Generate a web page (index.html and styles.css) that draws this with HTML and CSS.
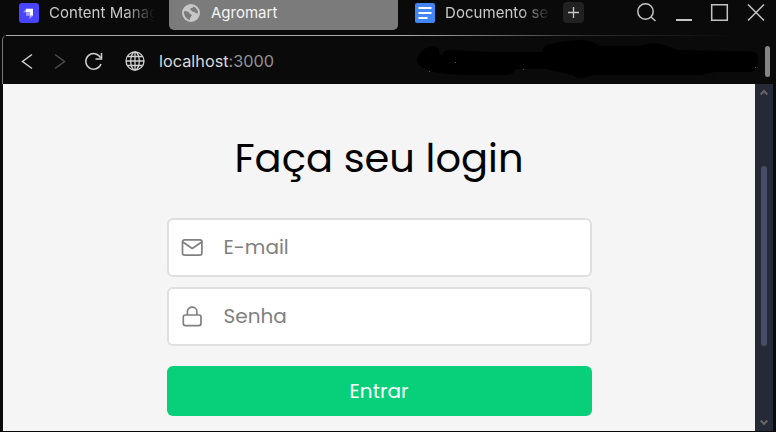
FILE: index.html
```html
<!DOCTYPE html>
<html lang="pt-BR">
<head>
<meta charset="utf-8">
<title>Agromart</title>
<link rel="stylesheet" href="styles.css">
</head>
<body>
<div class="window">
  <header class="tabs">
    <div class="tab tab-first">
      <svg class="tab-icon" width="20" height="20" viewBox="0 0 20 20"><rect width="20" height="20" rx="3" fill="#4945ff"/><path d="M7 5.700h7v7h-3.500V9.200H7z" fill="#fff"/><path d="M4 9.200L7 6v3.200zM7 9.200h3.500v3.500H7zM10.500 12.700H14l-3.500 3.400z" fill="#a5a3ff"/></svg>
      <span class="tab-label fade">Content Manag</span>
    </div>
    <div class="tab tab-active">
      <svg class="tab-icon" width="18" height="18" viewBox="0 0 18 18"><circle cx="9" cy="9" r="9" fill="#c7c7c7"/><path d="M2 7.300c2.200-.2 5 .2 5.300 1.700.3 1.400 2.200.8 2.500 2.300.2 1.200-1.600 1.500-1.700 2.800L8 16c-3.500-.6-6.300-4.500-6-8.700zM11.500 2.500c-.7 1.700-3 1.300-3.300 2.500-.2 1 1.300 1 1.600 2 .4 1.400 2.600.3 3.300 1.500.5.900 1.500 1 3 .7-.2-3-1.700-5.500-4.600-6.700z" fill="#7b7b7b"/></svg>
      <span class="tab-label">Agromart</span>
    </div>
    <div class="tab tab-doc">
      <svg class="tab-icon" width="20" height="20" viewBox="0 0 20 20"><rect width="20" height="20" rx="2" fill="#4285f4"/><path d="M3.500 5h13M3.500 10h13M3.500 15h9" stroke="#fff" stroke-width="2"/></svg>
      <span class="tab-label fade">Documento se</span>
    </div>
    <div class="new-tab"><svg width="21" height="21" viewBox="0 0 21 21"><path d="M5 10.500h11M10.500 5v11" stroke="#c8c8c8" stroke-width="1.300"/></svg></div>
    <svg class="controls" width="132" height="26" viewBox="636 0 132 26" fill="none" stroke="#c4c4c4" stroke-width="1.500"><circle cx="645.500" cy="11.500" r="7.700"/><path d="M651 17l4.500 4M748 4.500l16 16M764 4.500l-16 16"/><path d="M676 20h16" stroke-width="2"/><path d="M711.700 4.700h15.600v15.600h-15.600z"/></svg>
  </header>
  <div class="toolbar">
    <svg class="nav" width="130" height="28" viewBox="18 47 130 28" fill="none" stroke="#d0d0d0" stroke-width="1.500"><path d="M32 54.500L22.500 61.500l9.500 7"/><path d="M55 54.500l9.500 7-9.500 7" stroke="#4d4d4d"/><path d="M100.500 57.700A7.800 7.800 0 1 0 101 64M101.500 53v6h-6"/><g stroke-width="1.300"><circle cx="135" cy="61" r="9"/><ellipse cx="135" cy="61" rx="4.300" ry="9"/><path d="M135 52v18M126 61h18M127.500 56.500h15M127.500 65.500h15"/></g></svg>
    <div class="address">localhost<span class="port">:3000</span></div>
    <svg class="scribble" width="350" height="48" viewBox="412 36 350 48"><path d="M417 61c0-8 9-15 16-15 5 0 7 4 6 7l3 3c2-3 1-6 9-6l38 2h54c-1-7 5-8 13-9 17-4 34-5 44 3h40c12-6 25-1 38 4l57 1c18 0 22 1 23 5 1 5-1 10-2 13-3 4-8 3-15 3h-26l-14 3H592c-7 4-16 4-20 0l-26-6h-31c-1 6-6 6-14 6h-32c-25 0-49-3-52-14z" fill="#000"/><path d="M455 62.500h1M429 71.500h1M523 69.500h1M755 67.500h1" stroke="#555"/></svg>
    <div class="panel-thumb"></div>
  </div>
  <div class="viewport">
    <main class="page">
      <h1>Faça seu login</h1>
      <form class="login">
        <label class="field">
          <svg width="22" height="22" viewBox="0 0 22 22" fill="none" stroke="#808080" stroke-width="1.700" stroke-linejoin="round" stroke-linecap="round"><rect x="1.500" y="2.800" width="19.400" height="15.400" rx="2"/><path d="M1.800 5L11.200 11.500l9.500-6.500"/></svg>
          <span class="hint">E-mail</span>
        </label>
        <label class="field">
          <svg width="22" height="22" viewBox="0 0 22 22" fill="none" stroke="#808080" stroke-width="1.700"><rect x="2.300" y="9" width="17.700" height="10.600" rx="2"/><path d="M6.400 9V5.700c0-6 9.500-6 9.500 0V9"/></svg>
          <span class="hint">Senha</span>
        </label>
        <button type="button">Entrar</button>
      </form>
    </main>
    <aside class="scrollbar">
      <svg width="8" height="7" viewBox="0 0 8 7"><path d="M.7 5.500L4 2l3.300 3.500" fill="none" stroke="#686868" stroke-width="2"/></svg>
      <div class="thumb"></div>
      <svg class="down" width="8" height="7" viewBox="0 0 8 7"><path d="M.7 1.500L4 5l3.300-3.500" fill="none" stroke="#686868" stroke-width="2"/></svg>
    </aside>
  </div>
</div>
</body>
</html>
```
FILE: styles.css
```css
* { box-sizing: border-box; }
body { margin: 0; background: #0a0a0a; font-family: Inter, sans-serif; overflow: hidden; }
svg { display: block; flex: none; }
.window { width: 776px; height: 432px; display: flex; flex-direction: column; background: #0a0a0a; }
.tabs { height: 35px; display: flex; align-items: flex-start; flex: none; }
.tab { display: flex; height: 30px; align-items: flex-start; color: #cacaca; font-size: 15px; line-height: 20px; white-space: nowrap; }
.tab-first { width: 169px; padding: 3px 0 0 19px; }
.tab-active { width: 229px; padding: 3px 0 0 13px; background: #7b7b7b; border-radius: 0 0 5px 5px; color: #f4f4f4; }
.tab-doc { width: 165px; padding: 3px 0 0 17px; }
.tab-label { margin-left: 10px; letter-spacing: .05px; }
.tab-active .tab-label { margin-left: 11px; letter-spacing: 0; }
.tab-active .tab-icon { margin-top: 1px; }
.fade { width: 108px; -webkit-mask-image: linear-gradient(90deg, #000 70%, transparent 98%); mask-image: linear-gradient(90deg, #000 70%, transparent 98%); }
.new-tab { width: 21px; height: 21px; margin-top: 2px; border-radius: 4px; background: #212121; }
.controls { margin-left: 52px; }
.toolbar { height: 49px; flex: none; margin-left: 2px; display: flex; align-items: center; position: relative; border-left: 1px solid #777; border-top-left-radius: 5px; }
.toolbar::before { content: ""; position: absolute; left: 3px; right: 0; top: 0; height: 1px; background: linear-gradient(90deg, #aaa 0, #aaa 52%, #303030 75%, #0a0a0a 95%); }
.nav { margin-left: 15px; margin-top: 2px; }
.address { margin: 3px 0 0 11px; width: 253px; color: #dadada; font-size: 16.300px; line-height: 22px; white-space: nowrap; }
.port { color: #929292; }
.panel-thumb { width: 5px; height: 31px; margin: 4px 0 0 3px; border-radius: 3px; background: #858585; }
.viewport { height: 347px; margin-left: 3px; display: flex; }
.page { width: 752px; background: #f5f5f5; display: flex; flex-direction: column; align-items: center; }
h1 { margin: 44px 0 30px; height: 60px; font-family: Poppins, Inter, sans-serif; font-size: 40px; line-height: 60px; font-weight: 400; color: #000; white-space: nowrap; }
.login { width: 425px; display: flex; flex-direction: column; gap: 10px; font-family: Poppins, Inter, sans-serif; }
.field { height: 59px; display: flex; align-items: center; background: #fff; border: 2px solid #dfdfdf; border-radius: 6px; padding-left: 12px; }
.hint { margin: -2px 0 0 21px; color: #808080; font-size: 20px; line-height: 28px; }
button { margin-top: 10px; height: 50px; padding: 0; border: 0; border-radius: 6px; background: #08cf79; color: #fff; font: 400 20px/50px Poppins, Inter, sans-serif; }
.scrollbar { width: 18px; background: #262936; display: flex; flex-direction: column; align-items: center; padding-top: 5px; }
.thumb { width: 6px; height: 180px; margin-top: 70px; border-radius: 3px; background: #4a4d67; }
.down { margin-top: 73px; }
```
